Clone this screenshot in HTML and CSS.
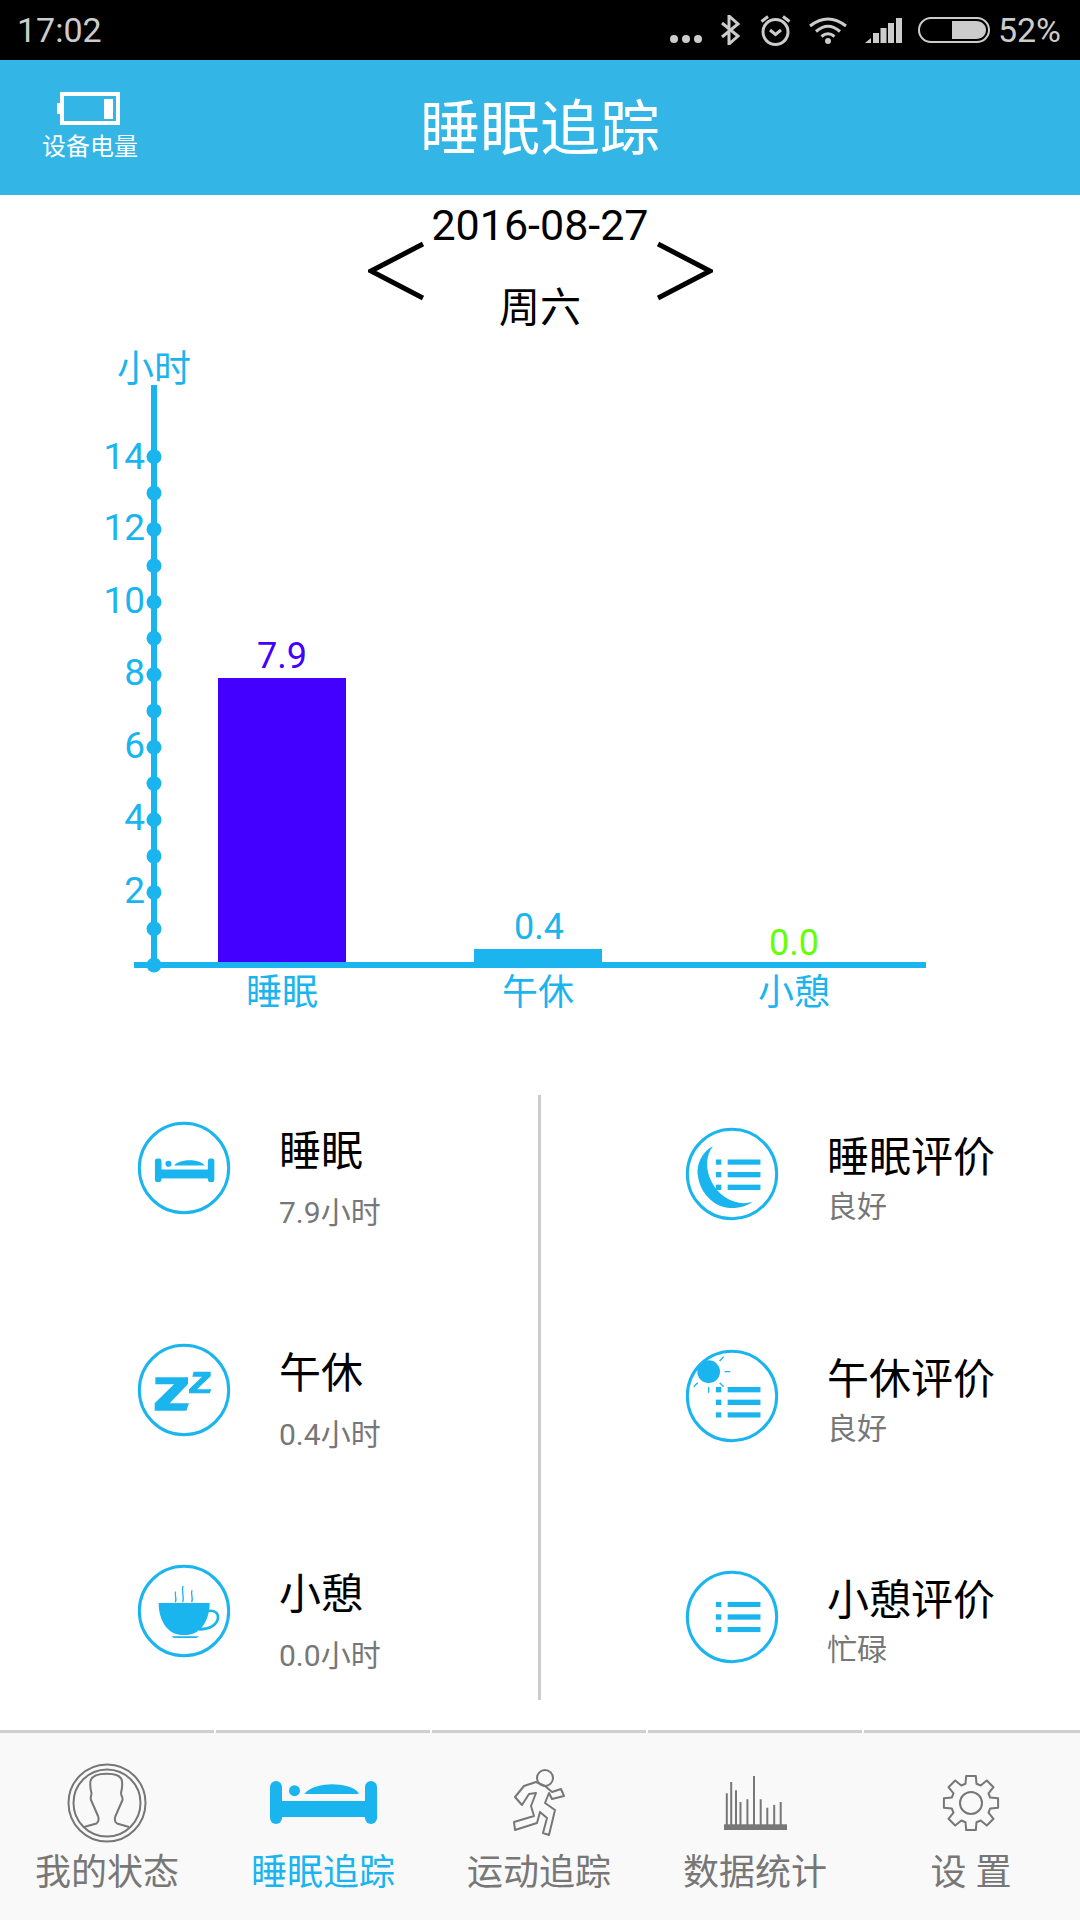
FILE: index.html
```html
<!DOCTYPE html>
<html lang="zh-CN">
<head>
  <meta charset="UTF-8">
  <meta name="viewport" content="width=device-width, initial-scale=1.0">
  <title>睡眠追踪</title>
  <link rel="stylesheet" href="styles.css">
</head>
<body>

  <svg class="defs" width="0" height="0">
    <symbol id="bed" viewBox="0 0 107 43">
      <rect x="0" y="0" width="12" height="43" rx="6"/>
      <rect x="95" y="0" width="12" height="43" rx="6"/>
      <rect x="10" y="20" width="87" height="16"/>
      <circle cx="24.5" cy="9.7" r="5.5"/>
      <path d="M34.5 13C39 6 53 3.3 62 3.3C72 3.3 86 6 89 13Z"/>
    </symbol>
    <symbol id="list-a" viewBox="0 0 135 92">
      <rect x="0" y="0" width="17" height="16"/>
      <rect x="0" y="38" width="17" height="16"/>
      <rect x="0" y="76" width="17" height="16"/>
      <rect x="36" y="0" width="99" height="16"/>
      <rect x="36" y="38" width="99" height="16"/>
      <rect x="36" y="76" width="99" height="16"/>
    </symbol>
  </svg>

  <div class="status-bar">
    <span class="clock">17:02</span>
    <div class="status-icons">
      <svg class="st-dots" width="32" height="10" viewBox="0 0 32 10"><circle cx="4" cy="5" r="4"/><circle cx="16" cy="5" r="4"/><circle cx="28" cy="5" r="4"/></svg>
      <svg class="st-line st-bt" width="19" height="30" viewBox="0 0 19 30"><path d="M1 8L17 21L8 29V1L17 9L1 22"/></svg>
      <svg class="st-line st-alarm" width="31" height="31" viewBox="0 0 31 31"><circle cx="15.5" cy="17" r="12.5"/><path d="M1.5 6.5L8 1.5M23 1.5L29.5 6.5"/><path d="M10 15L15.5 19.5L21 15"/></svg>
      <svg class="st-line st-wifi" width="38" height="27" viewBox="0 0 38 27"><path d="M1 9Q19 -5 37 9M7 14.5Q19 4 31 14.5M12.5 19.5Q19 14 25.5 19.5"/><circle class="st-fill" cx="19" cy="24" r="3"/></svg>
      <svg class="st-fill st-signal" width="37" height="25" viewBox="0 0 37 25"><path d="M0 25L6 20V25Z"/><rect x="8" y="15" width="6" height="10"/><rect x="15.500" y="10" width="6" height="15"/><rect x="23" y="5" width="6" height="20"/><rect x="31" y="0" width="6" height="25"/></svg>
      <svg class="st-batt" width="72" height="26" viewBox="0 0 72 26"><rect class="st-batt-box" x="1" y="1" width="70" height="24" rx="12"/><path class="st-fill" d="M34 4H58C64 4 68 8 68 13C68 18 64 22 58 22H34Z"/></svg>
      <span class="percent">52%</span>
    </div>
  </div>

  <header class="top-bar">
    <div class="device-battery">
      <svg width="63" height="33" viewBox="0 0 63 33"><rect x="3" y="0" width="60" height="33" fill="#fff"/><rect x="7" y="4" width="52" height="25" fill="#33b5e6"/><rect x="47" y="7" width="9" height="20" fill="#fff"/><rect x="0" y="11" width="3" height="11" fill="#fff"/></svg>
      <span>设备电量</span>
    </div>
    <h1>睡眠追踪</h1>
  </header>

  <section class="date-row">
    <svg class="chevron" width="56" height="60" viewBox="0 0 56 60"><path d="M55 3L3 30L55 57"/></svg>
    <div class="date-text">
      <div class="date">2016-08-27</div>
      <div class="week">周六</div>
    </div>
    <svg class="chevron" width="56" height="60" viewBox="0 0 56 60"><path d="M1 3L53 30L1 57"/></svg>
  </section>

  <!-- coordinates inside the chart are page coordinates -->
  <svg class="chart" width="1080" height="685" viewBox="0 345 1080 685">
    <rect x="218" y="678" width="128" height="286" fill="#4400ff"/>
    <rect x="474" y="949" width="128" height="15" fill="#1ab5ef"/>
    <rect x="151" y="385" width="6" height="580" fill="#1ab5ef"/>
    <rect x="134" y="962" width="792" height="6" fill="#1ab5ef"/>
    <g fill="#1ab5ef">
      <circle cx="154" cy="965" r="7.500"/>
      <circle cx="154" cy="928.700" r="7.500"/>
      <circle cx="154" cy="892.400" r="7.500"/>
      <circle cx="154" cy="856.100" r="7.500"/>
      <circle cx="154" cy="819.800" r="7.500"/>
      <circle cx="154" cy="783.500" r="7.500"/>
      <circle cx="154" cy="747.200" r="7.500"/>
      <circle cx="154" cy="710.900" r="7.500"/>
      <circle cx="154" cy="674.600" r="7.500"/>
      <circle cx="154" cy="638.300" r="7.500"/>
      <circle cx="154" cy="602" r="7.500"/>
      <circle cx="154" cy="565.700" r="7.500"/>
      <circle cx="154" cy="529.400" r="7.500"/>
      <circle cx="154" cy="493.100" r="7.500"/>
      <circle cx="154" cy="456.800" r="7.500"/>
    </g>
    <g class="chart-text">
      <text x="154" y="382" text-anchor="middle">小时</text>
      <text x="145" y="469" text-anchor="end">14</text>
      <text x="145" y="540" text-anchor="end">12</text>
      <text x="145" y="613" text-anchor="end">10</text>
      <text x="145" y="685" text-anchor="end">8</text>
      <text x="145" y="758" text-anchor="end">6</text>
      <text x="145" y="830" text-anchor="end">4</text>
      <text x="145" y="903" text-anchor="end">2</text>
      <text class="bar-value" x="282" y="668" text-anchor="middle" fill="#4400ff">7.9</text>
      <text class="bar-value" x="539" y="939" text-anchor="middle">0.4</text>
      <text class="bar-value" x="794" y="955" text-anchor="middle" fill="#66ff00">0.0</text>
      <text class="bar-value" x="282" y="1005" text-anchor="middle">睡眠</text>
      <text class="bar-value" x="538" y="1005" text-anchor="middle">午休</text>
      <text class="bar-value" x="794" y="1005" text-anchor="middle">小憩</text>
    </g>
  </svg>

  <section class="details">
    <div class="col col-left">
      <div class="item">
        <svg class="round-icon" viewBox="49 57 288 288"><circle cx="193" cy="201" r="134"/><use href="#bed" x="105" y="172" width="180" height="72"/></svg>
        <div class="item-text">
          <div class="item-title">睡眠</div>
          <div class="item-sub">7.9小时</div>
        </div>
      </div>
      <div class="item">
        <svg class="round-icon" viewBox="49 34 288 288"><circle cx="193" cy="178" r="134"/><path class="solid" d="M107 140H205V160L150 218H208L200 240H105V218L163 161H107Z"/><path class="solid" d="M222 123H273V137L232 176H275L270 188H208V176L247 138H218Z"/></svg>
        <div class="item-text">
          <div class="item-title">午休</div>
          <div class="item-sub">0.4小时</div>
        </div>
      </div>
      <div class="item">
        <svg class="round-icon" viewBox="49 36 288 288"><circle cx="193" cy="180" r="134"/><path class="solid" d="M117 156H270C270 210 240 252 200 252H187C145 252 117 210 117 156Z"/><path class="solid" d="M155 256H238L230 261H163Z"/><path class="thin" stroke-width="8" d="M266 180C285 176 296 188 295 200C293 222 268 236 238 235"/><path class="thin" stroke-width="4" d="M168 122C163 132 173 140 167 154M190 105C184 120 195 135 189 154M217 118C212 130 222 140 216 154"/></svg>
        <div class="item-text">
          <div class="item-title">小憩</div>
          <div class="item-sub">0.0小时</div>
        </div>
      </div>
    </div>
    <div class="col col-right">
      <div class="item">
        <svg class="round-icon" viewBox="43 44 288 288"><circle cx="187" cy="188" r="134"/><path class="solid" d="M130 105C90 125 80 170 85 195C92 250 140 292 185 290C215 290 235 282 248 272C200 285 150 260 125 210C105 170 110 130 130 105Z"/><use href="#list-a" x="138" y="144" width="135" height="92"/></svg>
        <div class="item-text">
          <div class="item-title">睡眠评价</div>
          <div class="item-sub">良好</div>
        </div>
      </div>
      <div class="item">
        <svg class="round-icon" viewBox="43 21 288 288"><circle cx="187" cy="165" r="134"/><circle class="solid" cx="117" cy="92" r="34"/><path class="thin" stroke-width="4" d="M150 60L162 47M165 92H182M150 125L162 137M117 138V155M84 125L72 137"/><use href="#list-a" x="138" y="138" width="135" height="92"/></svg>
        <div class="item-text">
          <div class="item-title">午休评价</div>
          <div class="item-sub">良好</div>
        </div>
      </div>
      <div class="item">
        <svg class="round-icon" viewBox="43 44 288 288"><circle cx="187" cy="188" r="134"/><use href="#list-a" x="138" y="142" width="135" height="92"/></svg>
        <div class="item-text">
          <div class="item-title">小憩评价</div>
          <div class="item-sub">忙碌</div>
        </div>
      </div>
    </div>
  </section>

  <nav class="tabs">
    <div class="tab">
      <div class="tab-icon">
        <svg class="line-icon" width="80" height="80" viewBox="0 0 80 80"><circle cx="40" cy="40" r="38.500"/><circle cx="40" cy="40" r="33.500"/><path d="M17 64L29.500 60.500C31.500 59 32 56 31 53L24 37C23 34 24.500 33 24.500 30C23 25 23 22 23.500 18C25 12 32 10.700 39.500 10.700C47 10.700 54 12 55 18C55.500 22 55 26 54 30C54 33 56 34 55.500 37L48.500 53C47.500 56 47.500 59 50 60.500L62 64"/></svg>
      </div>
      <span class="tab-label">我的状态</span>
    </div>
    <div class="tab tab-active">
      <div class="tab-icon">
        <svg class="bed-icon" width="107" height="43" viewBox="0 0 107 43"><use href="#bed" width="107" height="43"/></svg>
      </div>
      <span class="tab-label">睡眠追踪</span>
    </div>
    <div class="tab">
      <div class="tab-icon">
        <svg class="line-icon" width="60" height="75" viewBox="510 1765 60 75"><circle cx="546" cy="1778" r="8"/><path d="M537 1782L525 1786L516 1797L523 1805L530 1794L537 1793L532 1806L535 1816L515 1822L516 1830L538 1823L541 1812L548 1818L544 1833L550 1835L556 1810L546 1803L550 1793L553 1799L565 1796L562 1789L553 1792L546 1786Z"/></svg>
      </div>
      <span class="tab-label">运动追踪</span>
    </div>
    <div class="tab">
      <div class="tab-icon">
        <svg class="bars-icon" width="63" height="54" viewBox="0 0 63 54"><path d="M2.800 50V17.300M7.200 50V6M12 50V14.300M16.500 50V26M23.400 50V23.300M30 50V0M36.700 50V23.300M43.300 50V31.700M50.200 50V29M56.700 50V26"/><rect x="0" y="48.300" width="63" height="5.700"/></svg>
      </div>
      <span class="tab-label">数据统计</span>
    </div>
    <div class="tab">
      <div class="tab-icon">
        <svg class="line-icon" width="58" height="58" viewBox="-29 -29 58 58"><circle cx="0" cy="0" r="11"/><path d="M-5.500 -19.200L-4.800 -27.100L4.800 -27.100L5.500 -19.200L9.700 -17.500L15.800 -22.500L22.500 -15.800L17.500 -9.700L19.200 -5.500L27.100 -4.800L27.100 4.800L19.200 5.500L17.500 9.700L22.500 15.800L15.800 22.500L9.700 17.500L5.500 19.200L4.800 27.100L-4.800 27.100L-5.500 19.200L-9.700 17.500L-15.800 22.500L-22.500 15.800L-17.500 9.700L-19.200 5.500L-27.100 4.800L-27.100 -4.800L-19.200 -5.500L-17.500 -9.700L-22.500 -15.800L-15.800 -22.500L-9.700 -17.500Z"/></svg>
      </div>
      <span class="tab-label">设 置</span>
    </div>
  </nav>

</body>
</html>
```

FILE: styles.css
```css
body {
  margin: 0;
  width: 1080px;
  height: 1920px;
  overflow: hidden;
  display: flex;
  flex-direction: column;
  background-color: #fff;
  font-family: Roboto, "Noto Sans CJK SC", sans-serif;
}

svg {
  display: block;
}

.defs {
  position: absolute;
}

/* status bar */
.status-bar {
  height: 60px;
  flex: none;
  display: flex;
  justify-content: space-between;
  align-items: center;
  padding: 0 19px 0 17px;
  background-color: #000;
  color: #ccc;
  font-size: 34px;
}

.status-icons {
  display: flex;
  align-items: center;
}

.st-dots {
  fill: #ccc;
  margin-top: 18px;
}

.st-line {
  fill: none;
  stroke: #ccc;
  stroke-width: 3;
}

.st-fill {
  fill: #ccc;
  stroke: none;
}

.st-bt {
  margin-left: 19px;
}

.st-alarm {
  margin-left: 20px;
}

.st-wifi {
  margin-left: 18px;
}

.st-signal {
  margin-left: 18px;
  margin-top: 1px;
}

.st-batt {
  margin-left: 16px;
}

.st-batt-box {
  fill: none;
  stroke: #ccc;
  stroke-width: 2;
}

.percent {
  margin-left: 8px;
}

/* header */
.top-bar {
  height: 135px;
  flex: none;
  position: relative;
  display: flex;
  justify-content: center;
  align-items: center;
  background-color: #33b5e6;
  color: #fff;
}

.top-bar h1 {
  margin: 4px 0 0;
  font-size: 60px;
  font-weight: 400;
  line-height: 70px;
}

.device-battery {
  position: absolute;
  left: 42px;
  top: 32px;
  width: 96px;
  display: flex;
  flex-direction: column;
  align-items: center;
  font-size: 24px;
  line-height: 30px;
}

.device-battery svg {
  margin-bottom: 7px;
  margin-left: -3px;
}

/* date */
.date-row {
  height: 150px;
  flex: none;
  display: flex;
  justify-content: center;
  align-items: flex-start;
  gap: 10px;
}

.chevron {
  margin-top: 46px;
  fill: none;
  stroke: #000;
  stroke-width: 5;
}

.date-text {
  width: 213px;
  text-align: center;
  color: #000;
}

.date {
  margin: 0 -4px;
  font-size: 43px;
  line-height: 60px;
  white-space: nowrap;
}

.week {
  margin-top: 29px;
  font-size: 41px;
  line-height: 48px;
}

/* chart */
.chart {
  flex: none;
}

.chart-text {
  font-size: 37px;
  fill: #1ab5ef;
}

.chart-text .bar-value {
  font-size: 36px;
}

/* detail columns */
.details {
  margin-top: 65px;
  height: 605px;
  flex: none;
  display: grid;
  grid-template-columns: 541px 1fr;
  grid-template-rows: 605px;
}

.col {
  display: grid;
  grid-auto-rows: 221.5px;
  align-content: start;
  min-height: 0;
}

.col-left {
  padding: 25px 0 0 136px;
  border-right: 3px solid #ccc;
}

.col-right {
  padding: 31px 0 0 143px;
}

.item {
  display: flex;
  align-items: flex-start;
  gap: 47px;
}

.round-icon {
  width: 96px;
  height: 96px;
  flex: none;
  fill: #1ab5ef;
}

.round-icon > circle:first-child {
  fill: none;
  stroke: #1ab5ef;
  stroke-width: 9;
}

.round-icon .solid {
  fill: #1ab5ef;
}

.round-icon .thin {
  fill: none;
  stroke: #1ab5ef;
}

.item-text {
  margin-top: 8px;
}

.item-title {
  font-size: 42px;
  line-height: 48px;
  color: #000;
}

.item-sub {
  margin-top: 18px;
  font-size: 30px;
  line-height: 38px;
  color: #777;
}

.col-right .item-sub {
  margin-top: 6px;
}

/* bottom tabs */
.tabs {
  margin-top: 30px;
  flex: 1;
  display: flex;
  background-color: #f9f9f9;
}

.tab {
  flex: 1;
  position: relative;
  display: flex;
  flex-direction: column;
  align-items: center;
  border-top: 3px solid #d0d0d0;
  padding: 24px 2px 0 0;
  color: #777;
}

.tab::after {
  content: "";
  position: absolute;
  top: -3px;
  right: 0;
  width: 2px;
  height: 3px;
  background-color: #fff;
}

.tab:last-child::after {
  display: none;
}

.tab-icon {
  height: 91px;
  display: flex;
  align-items: center;
  justify-content: center;
}

.tab-label {
  margin-top: 5px;
  font-size: 36px;
  line-height: 40px;
}

.tab-active {
  color: #1ab5ef;
}

.bed-icon {
  fill: #1ab5ef;
}

.line-icon {
  fill: none;
  stroke: #777;
  stroke-width: 2;
  stroke-linejoin: round;
}

.bars-icon {
  fill: #777;
  stroke: #777;
  stroke-width: 2;
}

.bars-icon rect {
  stroke: none;
}
```
